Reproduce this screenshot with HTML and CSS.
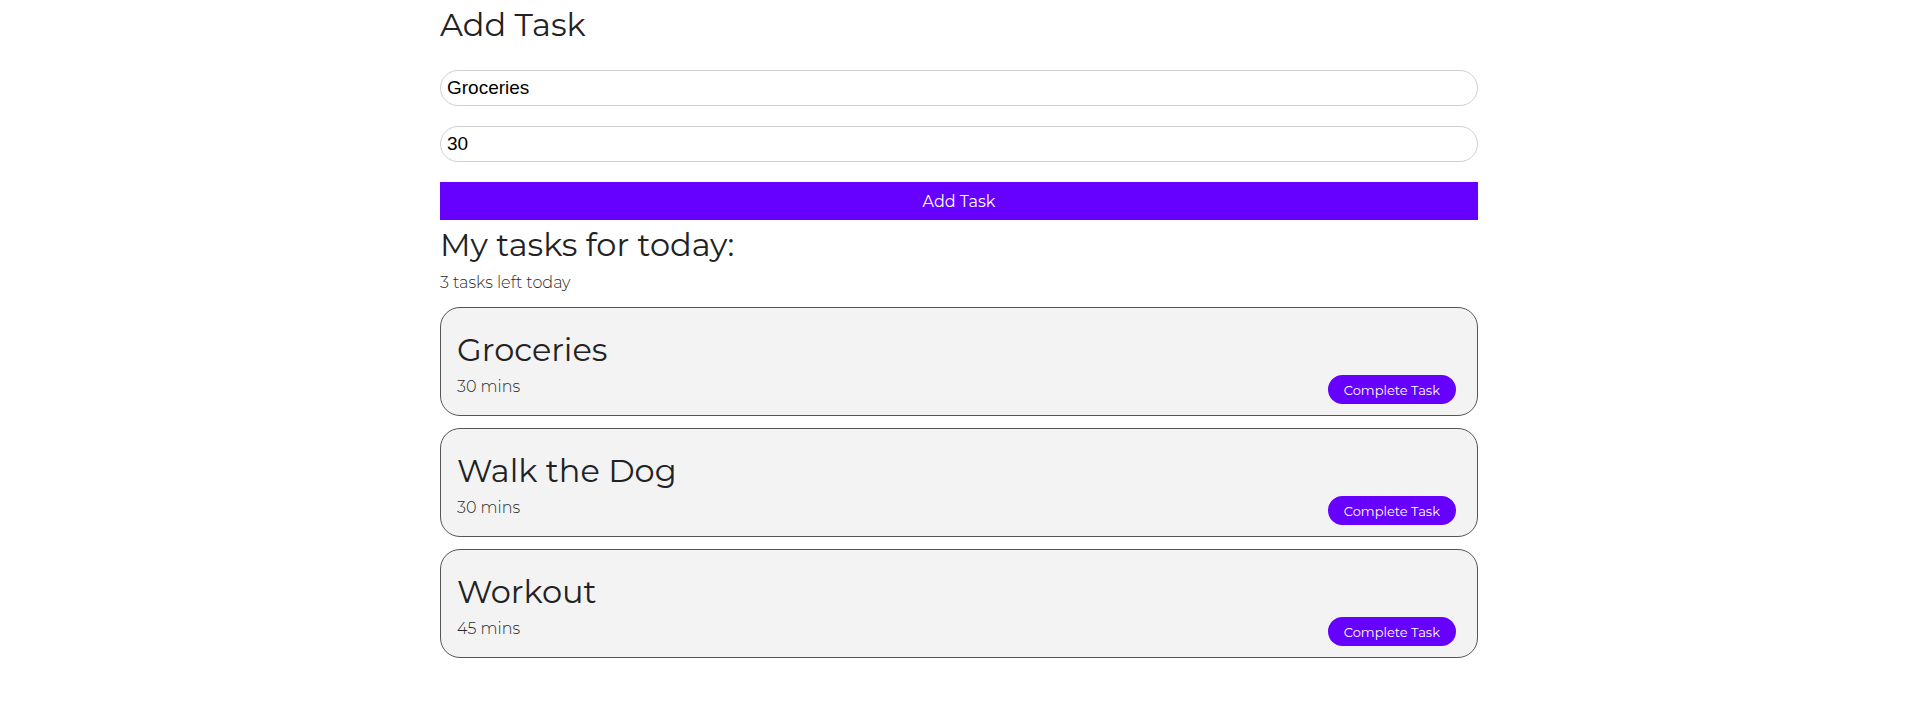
FILE: index.html
```html
<!DOCTYPE html>
<html lang="en">
<head>
<meta charset="utf-8">
<title>Tasks</title>
<link rel="stylesheet" href="styles.css">
</head>
<body>
<main class="app">
  <h1 class="title">Add Task</h1>
  <form class="add-form">
    <input class="field" type="text" value="Groceries">
    <input class="field" type="text" value="30">
    <button class="add-btn" type="button">Add Task</button>
  </form>
  <h2 class="title subtitle">My tasks for today:</h2>
  <p class="count">3 tasks left today</p>
  <ul class="tasks">
    <li class="task">
      <h3 class="task-name">Groceries</h3>
      <div class="task-row">
        <span class="task-time">30 mins</span>
        <button class="done-btn" type="button">Complete Task</button>
      </div>
    </li>
    <li class="task">
      <h3 class="task-name">Walk the Dog</h3>
      <div class="task-row">
        <span class="task-time">30 mins</span>
        <button class="done-btn" type="button">Complete Task</button>
      </div>
    </li>
    <li class="task">
      <h3 class="task-name">Workout</h3>
      <div class="task-row">
        <span class="task-time">45 mins</span>
        <button class="done-btn" type="button">Complete Task</button>
      </div>
    </li>
  </ul>
</main>
</body>
</html>
```
FILE: styles.css
```css
* { box-sizing: border-box; }

html, body {
  margin: 0;
  padding: 0;
  background: #ffffff;
}

body {
  font-family: "Montserrat", Inter, "Open Sans", sans-serif;
  color: #222222;
}

.app {
  width: 1038px;
  margin: 0 auto;
  padding-top: 5px;
}

.title {
  margin: 0;
  font-size: 32px;
  line-height: 40px;
  font-weight: 400;
  color: #222222;
}

.add-form {
  display: flex;
  flex-direction: column;
  gap: 20px;
  margin-top: 25px;
}

.field {
  display: block;
  width: 100%;
  height: 36px;
  margin: 0;
  padding: 0 6px;
  border: 1px solid #cfcfcf;
  border-radius: 18px;
  background: #fff;
  font-family: "Liberation Sans", Arial, sans-serif;
  font-size: 19px;
  color: #000;
  outline: none;
}

.add-btn {
  display: block;
  width: 100%;
  height: 38px;
  margin: 0;
  border: 0;
  border-radius: 0;
  background: #6600ff;
  color: #ffffff;
  font-family: inherit;
  font-size: 16px;
  font-weight: 400;
}

.subtitle {
  margin-top: 5px;
}

.count {
  margin: 8px 0 0;
  font-size: 16px;
  line-height: 20px;
  font-weight: 300;
  color: #2a2a2a;
}

.tasks {
  list-style: none;
  margin: 14px 0 0;
  padding: 0;
  display: flex;
  flex-direction: column;
  gap: 12px;
}

.task {
  height: 109px;
  padding: 22px 21px 11px 16px;
  border: 1px solid #555555;
  border-radius: 20px;
  background: #f3f3f3;
}

.task-name {
  margin: 0;
  font-size: 32px;
  line-height: 40px;
  font-weight: 400;
  color: #222222;
}

.task-row {
  display: flex;
  justify-content: space-between;
  align-items: flex-start;
  margin-top: 5px;
}

.task-time {
  margin-top: 2px;
  font-size: 16px;
  line-height: 20px;
  font-weight: 300;
  color: #2a2a2a;
}

.done-btn {
  height: 29px;
  padding: 0 16px;
  border: 0;
  border-radius: 15px;
  background: #6600ff;
  color: #ffffff;
  font-family: inherit;
  font-size: 13px;
  font-weight: 400;
}
```
